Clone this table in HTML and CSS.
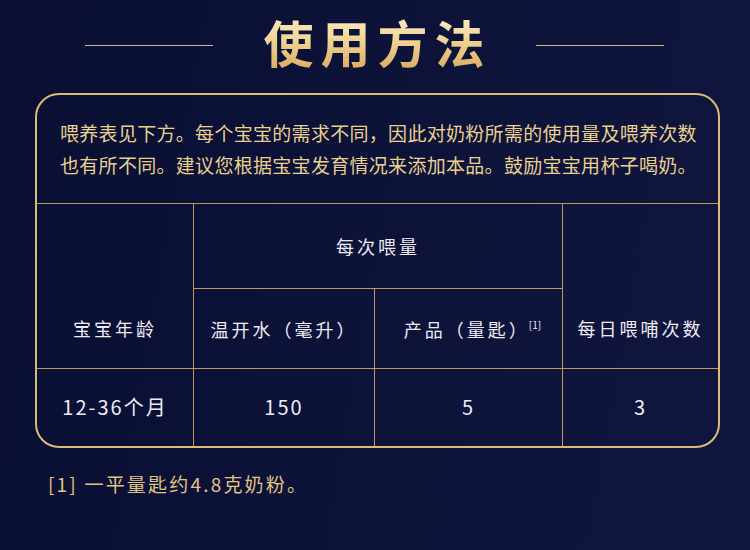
FILE: index.html
```html
<!DOCTYPE html>
<html lang="zh">
<head>
<meta charset="utf-8">
<link rel="stylesheet" href="styles.css">
</head>
<body>
<div class="page">
  <header class="head">
    <span class="rule"></span>
    <h1 class="title">使用方法</h1>
    <span class="rule"></span>
  </header>
  <section class="box">
    <p class="intro">喂养表见下方。每个宝宝的需求不同，因此对奶粉所需的使用量及喂养次数也有所不同。建议您根据宝宝发育情况来添加本品。鼓励宝宝用杯子喝奶。</p>
    <div class="grid">
      <div class="cell c-age">宝宝年龄</div>
      <div class="cell c-group">每次喂量</div>
      <div class="cell c-times">每日喂哺次数</div>
      <div class="cell c-water">温开水（毫升）</div>
      <div class="cell c-prod">产品（量匙）<sup class="ref">[1]</sup></div>
      <div class="cell data first">12-36个月</div>
      <div class="cell data">150</div>
      <div class="cell data">5</div>
      <div class="cell data">3</div>
    </div>
  </section>
  <p class="note">[1] 一平量匙约4.8克奶粉。</p>
</div>
</body>
</html>
```

FILE: styles.css
```css
* { box-sizing: border-box; }
html, body { margin: 0; padding: 0; }
body {
  width: 750px;
  height: 550px;
  overflow: hidden;
  font-family: "Noto Sans CJK SC", "Noto Sans", sans-serif;
  background: linear-gradient(100deg, #0a0f33 0%, #0c1238 45%, #10163d 100%);
}
.page {
  width: 750px;
  height: 550px;
  padding-top: 9px;
}
.head {
  display: flex;
  align-items: center;
  justify-content: center;
  gap: 51px;
  height: 64px;
  padding-right: 2px;
}
.rule {
  width: 128px;
  height: 1px;
  background: #cdb886;
  margin-top: 8px;
}
.title {
  margin: 0;
  font-size: 50px;
  font-weight: 700;
  line-height: 64px;
  letter-spacing: 7px;
  margin-right: -7px;
  background: linear-gradient(180deg, #fff3cf 0%, #f1d79a 45%, #d9a95a 100%);
  -webkit-background-clip: text;
  background-clip: text;
  color: transparent;
}
.box {
  margin: 20px 30px 0 35px;
  width: 685px;
  border: 2px solid #dcbb74;
  border-radius: 24px;
  overflow: hidden;
}
.intro {
  margin: 0;
  padding: 22px 14px 22px 23px;
  font-size: 19px;
  line-height: 32px;
  letter-spacing: 0.3px;
  color: #ead08f;
}
.grid {
  display: grid;
  grid-template-columns: 156px 181px 188px 1fr;
  grid-template-rows: 84px 80px 78px;
  border-top: 1px solid #b89a5e;
}
.cell {
  display: flex;
  align-items: center;
  justify-content: center;
  color: #ecebf2;
  font-size: 18px;
  letter-spacing: 3px;
  border-left: 1px solid #b89a5e;
  border-top: 1px solid #b89a5e;
}
.c-age {
  grid-column: 1;
  grid-row: 1 / 3;
  border-left: none;
  border-top: none;
  align-items: flex-end;
  padding-bottom: 27px;
}
.c-group {
  grid-column: 2 / 4;
  grid-row: 1;
  border-top: none;
}
.c-times {
  grid-column: 4;
  grid-row: 1 / 3;
  border-top: none;
  align-items: flex-end;
  padding-bottom: 27px;
}
.c-water { grid-column: 2; grid-row: 2; }
.c-prod { grid-column: 3; grid-row: 2; padding-left: 8px; }
.ref {
  font-size: 10px;
  letter-spacing: 0;
  align-self: flex-start;
  margin-top: 28px;
  margin-left: -1px;
}
.data {
  font-size: 20px;
  letter-spacing: 2px;
  padding-bottom: 3px;
}
.data.first { border-left: none; }
.note {
  margin: 22px 0 0 48px;
  font-size: 19px;
  line-height: 28px;
  letter-spacing: 2.2px;
  color: #e1c482;
}
```
